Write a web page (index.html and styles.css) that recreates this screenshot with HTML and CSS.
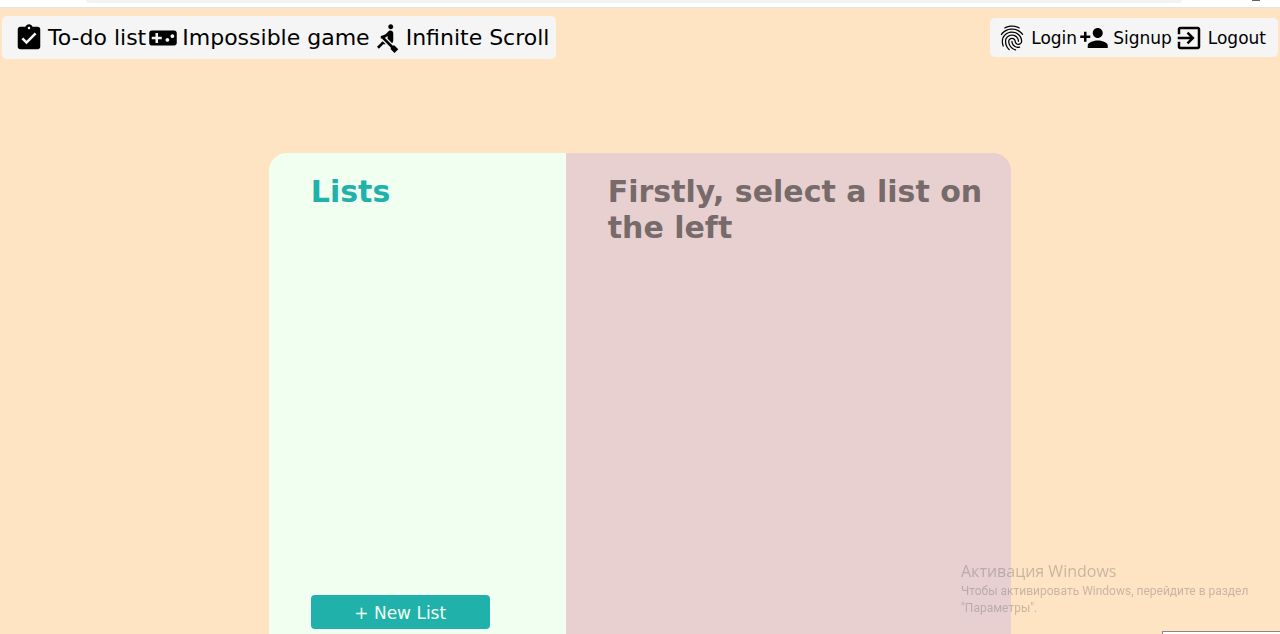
FILE: index.html
```html
<!DOCTYPE html>
<html lang="en">
<head>
<meta charset="utf-8">
<title>To-do list</title>
<link rel="stylesheet" href="styles.css">
</head>
<body>
<div class="chrome"><div class="chrome-address"></div><div class="chrome-dot"></div></div>
<header class="header">
  <nav class="bar bar-main" aria-label="Pages">
    <a class="link" href="#todo"><svg class="icon" viewBox="0 0 24 24" aria-hidden="true"><path d="M19 3h-4.18C14.4 1.84 13.3 1 12 1c-1.3 0-2.4.84-2.82 2H5c-1.1 0-2 .9-2 2v14c0 1.1.9 2 2 2h14c1.1 0 2-.9 2-2V5c0-1.1-.9-2-2-2zm-7 0c.55 0 1 .45 1 1s-.45 1-1 1-1-.45-1-1 .45-1 1-1zm-2 14l-4-4 1.41-1.41L10 14.17l6.59-6.59L18 9l-8 8z"/></svg>To-do list</a>
    <a class="link" href="#game"><svg class="icon" viewBox="0 0 24 24" aria-hidden="true"><path d="M21 6H3c-1.1 0-2 .9-2 2v8c0 1.1.9 2 2 2h18c1.1 0 2-.9 2-2V8c0-1.1-.9-2-2-2zm-10 7H8v3H6v-3H3v-2h3V8h2v3h3v2zm4.5 2c-.83 0-1.5-.67-1.5-1.5s.67-1.5 1.5-1.5 1.5.67 1.5 1.5-.67 1.5-1.5 1.5zm4-3c-.83 0-1.5-.67-1.5-1.5S18.67 9 19.5 9s1.5.67 1.5 1.5-.67 1.5-1.5 1.5z"/></svg>Impossible game</a>
    <a class="link" href="#scroll"><svg class="icon" viewBox="0 0 24 24" aria-hidden="true"><path d="M8.5 14.5L4 19l1.5 1.5L9 17h2l-2.5-2.5zM15 1c-1.1 0-2 .9-2 2s.9 2 2 2 2-.9 2-2-.9-2-2-2zm6 20.01L18 24l-2.99-3.01V19.5l-7.1-7.09c-.31.05-.61.07-.91.07v-2.16c1.66.03 3.61-.87 4.67-2.04l1.4-1.55c.19-.21.43-.38.69-.5.29-.14.62-.23.96-.23h.03C15.99 6.01 17 7.02 17 8.26v5.75c0 .84-.35 1.61-.92 2.16l-3.58-3.58v-2.27c-.63.52-1.43 1.02-2.29 1.39L16.5 18H18l3 3.01z"/></svg>Infinite Scroll</a>
  </nav>
  <nav class="bar bar-account" aria-label="Account">
    <a class="link" href="#login"><svg class="icon" viewBox="0 0 24 24" aria-hidden="true"><path d="M17.81 4.47c-.08 0-.16-.02-.23-.06C15.66 3.42 14 3 12.01 3c-1.98 0-3.86.47-5.57 1.41-.24.13-.54.04-.68-.2-.13-.24-.04-.55.2-.68C7.82 2.52 9.86 2 12.01 2c2.13 0 3.99.47 6.03 1.52.25.13.34.43.21.67-.09.18-.26.28-.44.28zM3.5 9.72c-.1 0-.2-.03-.29-.09-.23-.16-.28-.47-.12-.7.99-1.4 2.25-2.5 3.75-3.27C9.98 4.04 14 4.03 17.15 5.65c1.5.77 2.76 1.86 3.75 3.25.16.22.11.54-.12.7-.23.16-.54.11-.7-.12-.9-1.26-2.04-2.25-3.39-2.94-2.87-1.47-6.54-1.47-9.4.01-1.36.7-2.5 1.7-3.4 2.96-.08.14-.23.21-.39.21zm6.25 12.07c-.13 0-.26-.05-.35-.15-.87-.87-1.34-1.43-2.01-2.64-.69-1.23-1.05-2.73-1.05-4.34 0-2.97 2.54-5.39 5.66-5.39s5.66 2.42 5.66 5.39c0 .28-.22.5-.5.5s-.5-.22-.5-.5c0-2.42-2.09-4.39-4.66-4.39-2.57 0-4.66 1.97-4.66 4.39 0 1.44.32 2.77.93 3.85.64 1.15 1.08 1.64 1.85 2.42.19.2.19.51 0 .71-.11.1-.24.15-.37.15zm7.17-1.85c-1.19 0-2.24-.3-3.1-.89-1.49-1.01-2.38-2.65-2.38-4.39 0-.28.22-.5.5-.5s.5.22.5.5c0 1.41.72 2.74 1.94 3.56.71.48 1.54.71 2.54.71.24 0 .64-.03 1.04-.1.27-.05.53.13.58.41.05.27-.13.53-.41.58-.57.11-1.07.12-1.21.12zM14.91 22c-.04 0-.09-.01-.13-.02-1.59-.44-2.63-1.03-3.72-2.1-1.4-1.39-2.17-3.24-2.17-5.22 0-1.62 1.38-2.94 3.08-2.94 1.7 0 3.08 1.32 3.08 2.94 0 1.07.93 1.94 2.08 1.94s2.08-.87 2.08-1.94c0-3.77-3.25-6.83-7.25-6.83-2.84 0-5.44 1.58-6.61 4.03-.39.81-.59 1.76-.59 2.8 0 .78.07 2.01.67 3.61.1.26-.03.55-.29.64-.26.1-.55-.04-.64-.29-.49-1.31-.73-2.61-.73-3.96 0-1.2.23-2.29.68-3.24 1.33-2.79 4.28-4.6 7.51-4.6 4.55 0 8.25 3.51 8.25 7.83 0 1.62-1.38 2.94-3.08 2.94s-3.08-1.32-3.08-2.94c0-1.07-.93-1.94-2.08-1.94s-2.08.87-2.08 1.94c0 1.71.66 3.31 1.87 4.51.95.94 1.86 1.46 3.27 1.85.27.07.42.35.35.61-.05.23-.26.38-.47.38z"/></svg>Login</a>
    <a class="link" href="#signup"><svg class="icon" viewBox="0 0 24 24" aria-hidden="true"><path d="M15 12c2.21 0 4-1.79 4-4s-1.79-4-4-4-4 1.79-4 4 1.79 4 4 4zm-9-2V7H4v3H1v2h3v3h2v-3h3v-2H6zm9 4c-2.67 0-8 1.34-8 4v2h16v-2c0-2.66-5.33-4-8-4z"/></svg>Signup</a>
    <a class="link" href="#logout"><svg class="icon" viewBox="0 0 24 24" aria-hidden="true"><path d="M10.09 15.59L11.5 17l5-5-5-5-1.41 1.41L12.67 11H3v2h9.67l-2.58 2.59zM19 3H5c-1.11 0-2 .9-2 2v4h2V5h14v14H5v-4H3v4c0 1.1.89 2 2 2h14c1.1 0 2-.9 2-2V5c0-1.1-.9-2-2-2z"/></svg>Logout</a>
  </nav>
</header>
<main class="card">
  <section class="lists">
    <h1 class="title">Lists</h1>
    <button class="new-list" type="button">+ New List</button>
  </section>
  <section class="tasks">
    <h1 class="title">Firstly, select a list on the left</h1>
  </section>
</main>
<aside class="notice">
  <p class="notice-title">Активация Windows</p>
  <p class="notice-text">Чтобы активировать Windows, перейдите в раздел "Параметры".</p>
</aside>
<div class="popup-edge"></div>
</body>
</html>
```
FILE: styles.css
```css
* {
  box-sizing: border-box;
}

body {
  display: flex;
  flex-direction: column;
  min-height: 100vh;
  margin: 0;
  background: #ffe4c4;
  font-family: Verdana, "DejaVu Sans", sans-serif;
}

.chrome {
  display: flex;
  justify-content: space-between;
  height: 8px;
  padding: 0 20px 0 86px;
  background: #fff;
  border-bottom: 1px solid #e6e2de;
  overflow: hidden;
}

.chrome-address {
  flex: 1;
  height: 3px;
  margin-right: 70px;
  background: #f1f3f4;
  border-radius: 0 0 12px 12px;
}

.chrome-dot {
  width: 8px;
  height: 1px;
  background: #5f6368;
}

.header {
  display: flex;
  justify-content: space-between;
  align-items: center;
  padding: 8px 2px 0;
}

.bar {
  display: flex;
  align-items: center;
  gap: 2px;
  background: #f5f5f5;
  border-radius: 5px;
}

.bar-main {
  padding: 7px 7px 6px 12px;
  font-size: 22px;
}

.bar-account {
  padding: 5px 12px 4px 7px;
  font-size: 17px;
}

.link {
  display: flex;
  align-items: center;
  gap: 4px;
  color: #000;
  line-height: 30px;
  text-decoration: none;
  white-space: nowrap;
}

.icon {
  width: 30px;
  height: 30px;
}

.card {
  display: grid;
  flex: 1;
  grid-template-columns: 2fr 3fr;
  width: 58%;
  margin: 94px auto 0;
  border-radius: 18px 18px 0 0;
  overflow: hidden;
}

.lists {
  display: flex;
  flex-direction: column;
  align-items: flex-start;
  justify-content: space-between;
  padding: 21px 42px 5px;
  background: #f0fff0;
  color: #20b2aa;
}

.tasks {
  padding: 21px 20px 5px 42px;
  background: #e8d0d0;
  color: #776a6a;
}

.title {
  margin: 0;
  font-size: 30px;
  line-height: 36px;
}

.new-list {
  width: 84%;
  padding: 7px 6px 5px;
  background: #20b2aa;
  border: 0;
  border-radius: 4px;
  color: #f0fff0;
  font: 17px/22px Verdana, "DejaVu Sans", sans-serif;
}

.notice {
  position: fixed;
  right: 19px;
  bottom: 17px;
  width: 300px;
  color: rgba(130, 125, 125, 0.45);
  font-family: "Segoe UI", "Open Sans", sans-serif;
}

.notice-title {
  margin: 0;
  font-size: 16px;
  line-height: 24px;
}

.notice-text {
  margin: 0;
  font-family: "Segoe UI", Roboto, sans-serif;
  font-size: 12px;
  line-height: 17px;
}

.popup-edge {
  position: fixed;
  right: 0;
  bottom: 0;
  width: 118px;
  height: 3px;
  background: #fff;
  border: 1px solid #888;
  border-width: 1px 0 0 1px;
}
```
